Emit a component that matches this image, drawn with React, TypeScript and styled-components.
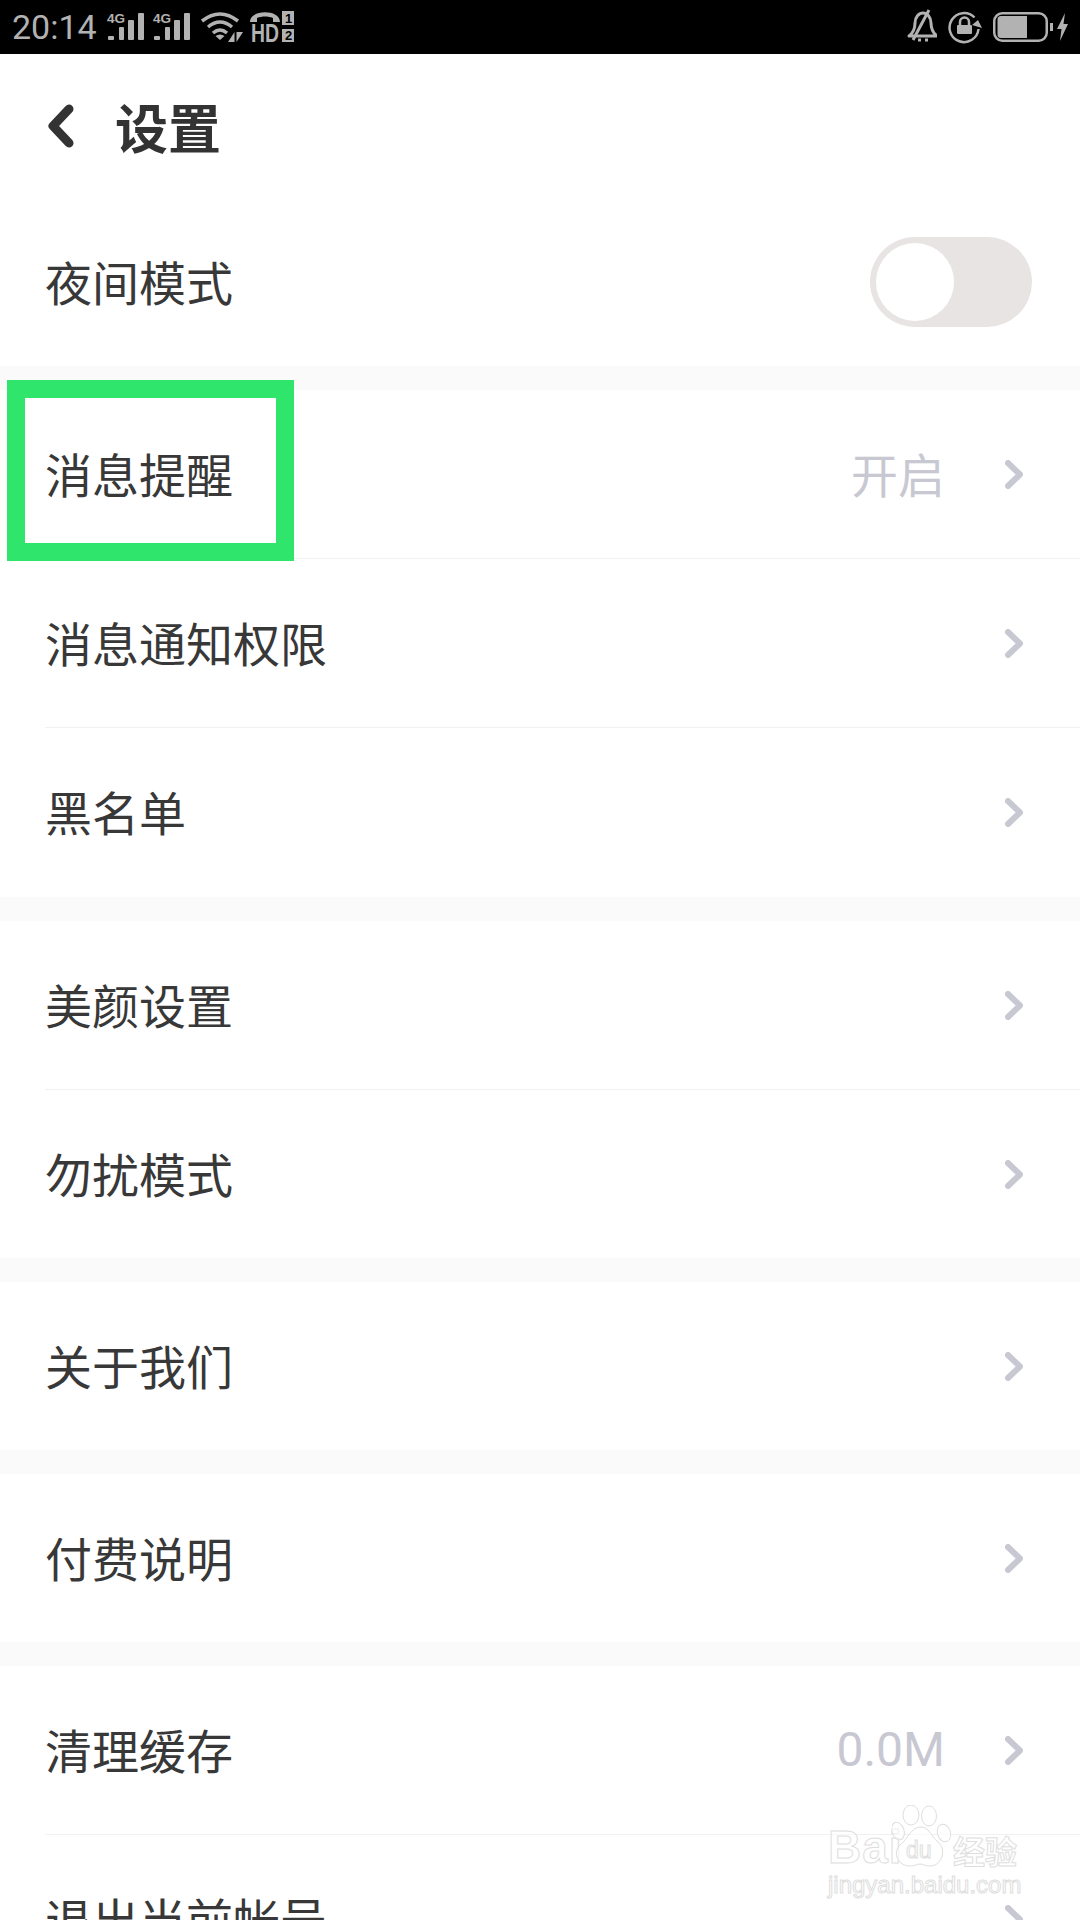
import React from 'react';
import styled, { createGlobalStyle } from 'styled-components';

const CJK = `"Noto Sans CJK SC", "Noto Sans", sans-serif`;

const GlobalStyle = createGlobalStyle`
  html, body {
    margin: 0;
    padding: 0;
    background: #fff;
  }
`;

const Page = styled.div`
  position: relative;
  width: 1080px;
  height: 1920px;
  overflow: hidden;
  background: #fafafa;
  font-family: ${CJK};
  color: #383838;
`;

const StatusBar = styled.div`
  height: 54px;
  background: #000;
  color: #b2b2b2;
  display: flex;
  align-items: center;
  justify-content: space-between;
  padding: 0 12px;
`;

const StatusGroup = styled.div<{ $gap: number }>`
  display: flex;
  align-items: center;
  gap: ${(p) => p.$gap}px;
`;

const Clock = styled.span`
  font-family: Roboto, sans-serif;
  font-size: 34px;
  line-height: 54px;
  margin-right: 4px;
`;

const Header = styled.div`
  height: 144px;
  background: #fff;
  display: flex;
  align-items: center;
  padding-left: 46px;
`;

const Title = styled.h1`
  margin: 0 0 0 41px;
  font-size: 53px;
  font-weight: 700;
  color: #333;
  line-height: 1;
`;

const Section = styled.div<{ $tail?: number }>`
  background: #fff;
  margin-bottom: 24px;
  padding-bottom: ${(p) => p.$tail ?? 0}px;
`;

const Row = styled.div<{ $divider: boolean }>`
  height: 168px;
  margin-left: 45px;
  padding-right: 57px;
  display: flex;
  align-items: center;
  border-bottom: ${(p) => (p.$divider ? '1px solid #f1f1f1' : 'none')};
`;

const Label = styled.span`
  flex: 1;
  font-size: 47px;
  line-height: 1;
  margin-bottom: 3px;
`;

const Value = styled.span`
  font-size: 47px;
  line-height: 1;
  color: #c8c8d2;
  margin: 0 60px 3px 0;
`;

const NumberValue = styled(Value)`
  font-family: Roboto, sans-serif;
  font-size: 48px;
  margin-bottom: 0;
`;

const Toggle = styled.div`
  width: 162px;
  height: 90px;
  margin-right: -9px;
  box-sizing: border-box;
  padding: 6px;
  border-radius: 45px;
  background: #e9e4e4;
`;

const Knob = styled.div`
  width: 78px;
  height: 78px;
  border-radius: 50%;
  background: #fff;
`;

const Highlight = styled.div`
  position: absolute;
  left: 7px;
  top: 380px;
  width: 287px;
  height: 181px;
  box-sizing: border-box;
  border: 18px solid #2fe56b;
`;

const Watermark = styled.div`
  position: absolute;
  left: 828px;
  top: 1805px;
  width: 196px;
  color: rgba(255, 255, 255, 0.55);
  -webkit-text-stroke: 1px #dedede;
`;

const WatermarkLogo = styled.div`
  height: 62px;
  display: flex;
  align-items: flex-end;
`;

const WatermarkBai = styled.span`
  font-family: 'Liberation Sans', sans-serif;
  font-size: 46px;
  font-weight: 700;
  line-height: 46px;
  width: 64px;
  letter-spacing: 1px;
  margin-bottom: -3px;
`;

const WatermarkCn = styled.span`
  font-family: ${CJK};
  font-size: 32px;
  font-weight: 700;
  line-height: 34px;
  margin-left: 1px;
  white-space: nowrap;
`;

const WatermarkDomain = styled.div`
  font-family: 'Liberation Sans', sans-serif;
  font-size: 24px;
  line-height: 28px;
  margin-top: 4px;
  white-space: nowrap;
`;

const Chevron = () => (
  <svg width="18" height="29" viewBox="0 0 18 29" fill="none">
    <path d="M3 3l12 11.500L3 26" stroke="#c8c8d2" strokeWidth="6" strokeLinecap="round" strokeLinejoin="round" />
  </svg>
);

const BackIcon = () => (
  <svg width="28" height="44" viewBox="0 0 28 44" fill="none">
    <path d="M23 5L7 22l16 17" stroke="#333" strokeWidth="9" strokeLinecap="round" strokeLinejoin="round" />
  </svg>
);

const SignalIcon = () => (
  <svg width="42" height="36" viewBox="0 0 42 36" fill="#b2b2b2">
    <text x="2" y="14" fontFamily="Liberation Sans" fontSize="13.500" fontWeight="700">4G</text>
    <rect x="3" y="27" width="6" height="4" rx="1" />
    <rect x="14" y="18" width="5" height="13" rx="1" />
    <rect x="23" y="11" width="6" height="20" rx="1" />
    <rect x="33" y="4" width="6" height="27" rx="1" />
  </svg>
);

const WifiIcon = () => (
  <svg width="48" height="36" viewBox="0 0 48 36" fill="none">
    <path d="M5 12Q23-2 41 12" stroke="#b2b2b2" strokeWidth="3.500" />
    <path d="M11 18Q23 8 35 18" stroke="#b2b2b2" strokeWidth="3.500" />
    <path d="M16 24Q23 18 30 24" stroke="#b2b2b2" strokeWidth="3.500" />
    <path d="M18.500 27L23 31l4.500-4Q23 24 18.500 27z" fill="#b2b2b2" />
    <path d="M37.500 23V33H31zM39.500 33V23H46z" fill="#b2b2b2" />
  </svg>
);

const HdIcon = () => (
  <svg width="46" height="44" viewBox="0 -4 46 44" fill="#b2b2b2">
    <path d="M1 13c0-13 30-13 30 0h-7V9c-5-2-11-2-16 0v4z" />
    <text x="2" y="33" fontFamily="Liberation Sans" fontSize="25" fontWeight="700" textLength="28" lengthAdjust="spacingAndGlyphs">HD</text>
    <rect x="33" y="2" width="12" height="14" />
    <text x="36" y="14" fontFamily="Liberation Sans" fontSize="13" fontWeight="700" fill="#000">1</text>
    <rect x="33" y="20" width="12" height="13" />
    <text x="36" y="31" fontFamily="Liberation Sans" fontSize="13" fontWeight="700" fill="#000">2</text>
  </svg>
);

const BellOffIcon = () => (
  <svg width="32" height="36" viewBox="-2 0 32 36" fill="none" stroke="#b2b2b2" strokeWidth="3">
    <path d="M2 27C6 24 8 20 8 14 8 8 12 4 16 4s8 4 8 10c0 6 2 10 6 13z" strokeLinejoin="round" />
    <path d="M11 31h3M18 31h3" />
    <path d="M6 31L22 1" />
  </svg>
);

const LockIcon = () => (
  <svg width="34" height="36" viewBox="0 0 34 36" fill="none">
    <path d="M26.500 8.500A14.500 14.500 0 1 0 30.500 20" stroke="#b2b2b2" strokeWidth="2.500" />
    <path d="M24 16l6-5 4 8z" fill="#b2b2b2" />
    <rect x="9" y="16" width="15" height="9" rx="1" fill="#b2b2b2" />
    <path d="M12 16v-3a4.500 4.500 0 0 1 9 0v3" stroke="#b2b2b2" strokeWidth="2.500" />
  </svg>
);

const BatteryIcon = () => (
  <svg width="75" height="36" viewBox="0 0 75 36" fill="#b2b2b2">
    <rect x="1.250" y="4.250" width="52.500" height="27.500" rx="8" fill="none" stroke="#b2b2b2" strokeWidth="2.500" />
    <path d="M8 7h26v22H8a3.500 3.500 0 0 1-3.500-3.500v-15A3.500 3.500 0 0 1 8 7z" />
    <rect x="57" y="14" width="3" height="8" />
    <path d="M72 4l-8 16h4.500L67 32l8-17h-4.500z" />
  </svg>
);

const PawIcon = () => (
  <svg width="60" height="62" viewBox="0 0 60 62" fill="rgba(255,255,255,0.55)" stroke="#dedede" strokeWidth="1">
    <ellipse cx="19" cy="10" rx="8" ry="10" />
    <ellipse cx="37" cy="11" rx="7.500" ry="10" />
    <ellipse cx="6" cy="26" rx="6" ry="9" transform="rotate(-18 6 26)" />
    <ellipse cx="52" cy="28" rx="6.500" ry="9" transform="rotate(-18 52 28)" />
    <path d="M29 22c8 0 10 9 17 15 9 8 4 24-8 24-5 0-7-2-10-2s-5 2-10 2C6 61 0 48 8 40c8-6 11-18 21-18z" />
    <text x="14" y="53" fontFamily="Liberation Sans" fontSize="23" fontWeight="400">du</text>
  </svg>
);

interface RowItem {
  label: string;
  value?: string;
  numeric?: boolean;
}

const SECTIONS: RowItem[][] = [
  [
    { label: '消息提醒', value: '开启' },
    { label: '消息通知权限' },
    { label: '黑名单' },
  ],
  [{ label: '美颜设置' }, { label: '勿扰模式' }],
  [{ label: '关于我们' }],
  [{ label: '付费说明' }],
  [
    { label: '清理缓存', value: '0.0M', numeric: true },
    { label: '退出当前帐号' },
  ],
];

const App = () => (
  <Page>
    <GlobalStyle />
    <StatusBar>
      <StatusGroup $gap={4}>
        <Clock>20:14</Clock>
        <SignalIcon />
        <SignalIcon />
        <WifiIcon />
        <HdIcon />
      </StatusGroup>
      <StatusGroup $gap={11}>
        <BellOffIcon />
        <LockIcon />
        <BatteryIcon />
      </StatusGroup>
    </StatusBar>

    <Header>
      <BackIcon />
      <Title>设置</Title>
    </Header>

    <Section>
      <Row $divider={false}>
        <Label>夜间模式</Label>
        <Toggle>
          <Knob />
        </Toggle>
      </Row>
    </Section>

    {SECTIONS.map((rows) => (
      <Section key={rows[0].label} $tail={rows.length === 3 ? 1 : 0}>
        {rows.map((row, i) => (
          <Row key={row.label} $divider={i < rows.length - 1}>
            <Label>{row.label}</Label>
            {row.value &&
              (row.numeric ? (
                <NumberValue>{row.value}</NumberValue>
              ) : (
                <Value>{row.value}</Value>
              ))}
            <Chevron />
          </Row>
        ))}
      </Section>
    ))}

    <Highlight />

    <Watermark>
      <WatermarkLogo>
        <WatermarkBai>Bai</WatermarkBai>
        <PawIcon />
        <WatermarkCn>经验</WatermarkCn>
      </WatermarkLogo>
      <WatermarkDomain>jingyan.baidu.com</WatermarkDomain>
    </Watermark>
  </Page>
);

export default App;
